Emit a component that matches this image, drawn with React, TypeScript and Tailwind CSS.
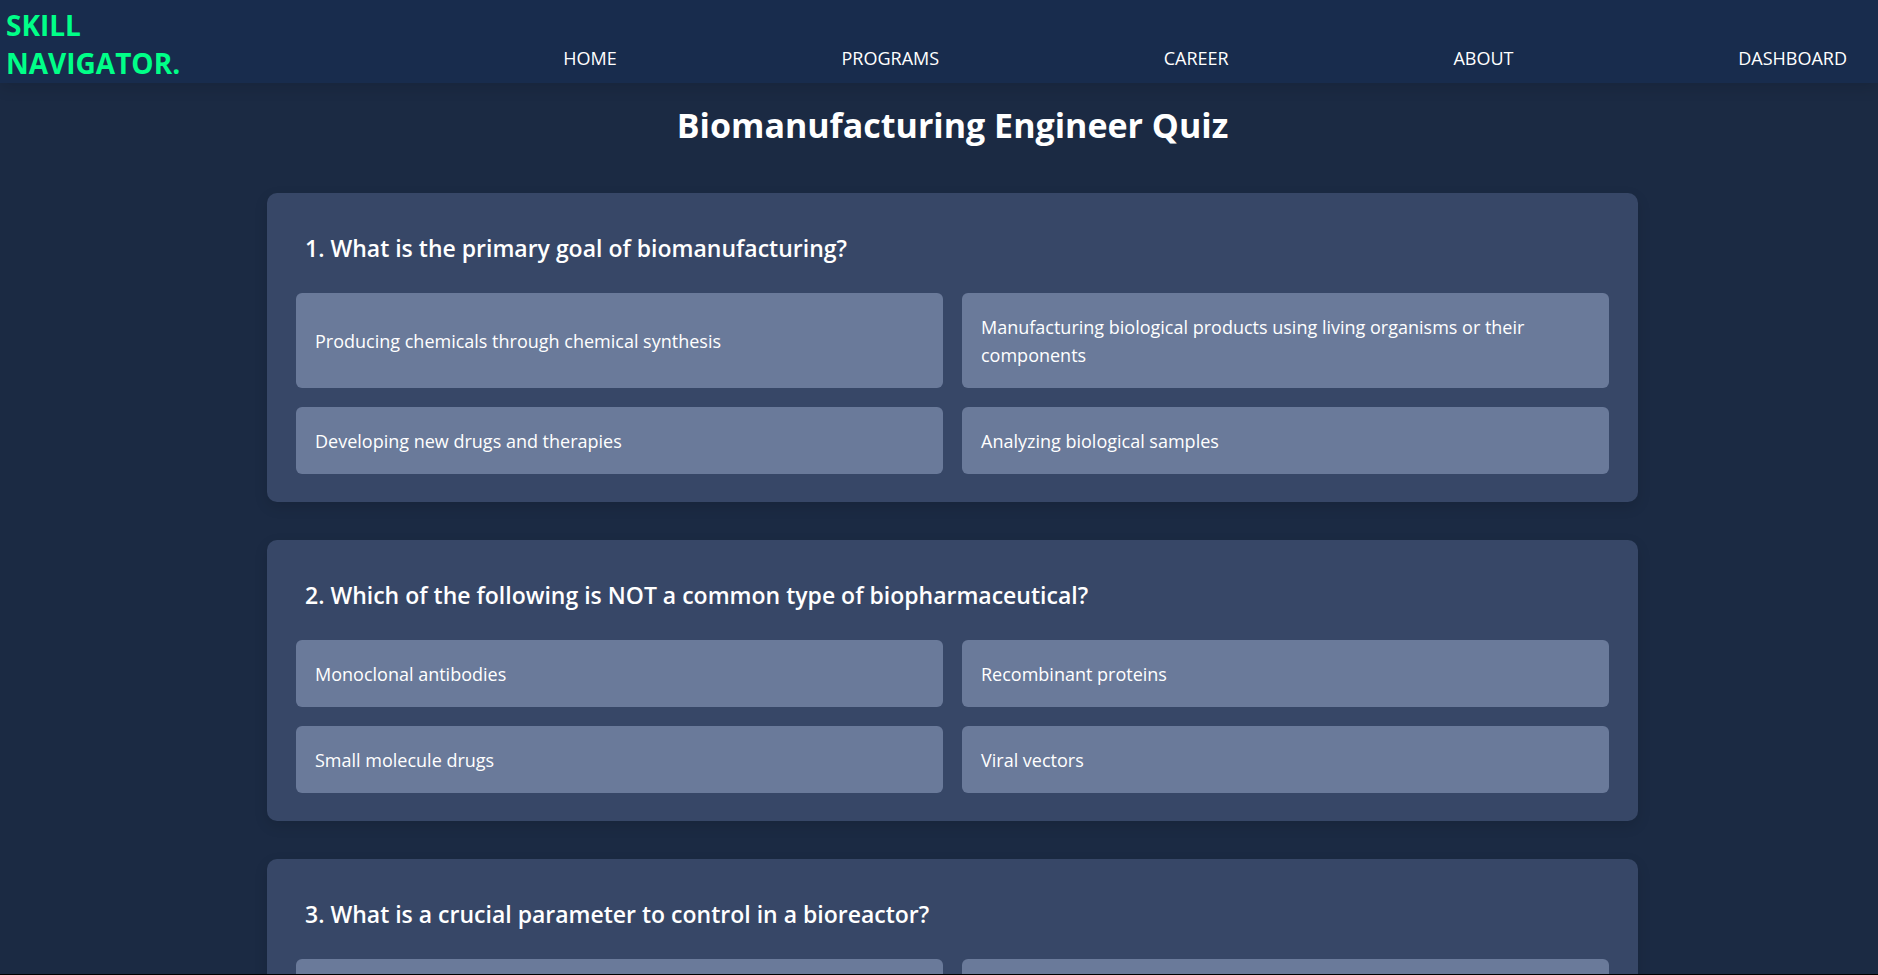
import { useState } from "react";

type Question = { text: string; options: string[] };

const links = ["Home", "Programs", "Career", "About", "Dashboard"];

const questions: Question[] = [
  {
    text: "What is the primary goal of biomanufacturing?",
    options: [
      "Producing chemicals through chemical synthesis",
      "Manufacturing biological products using living organisms or their components",
      "Developing new drugs and therapies",
      "Analyzing biological samples",
    ],
  },
  {
    text: "Which of the following is NOT a common type of biopharmaceutical?",
    options: ["Monoclonal antibodies", "Recombinant proteins", "Small molecule drugs", "Viral vectors"],
  },
  {
    text: "What is a crucial parameter to control in a bioreactor?",
    options: ["Temperature", "pH", "Dissolved oxygen", "All of the above"],
  },
];

function Header() {
  return (
    <header className="z-10 flex items-end bg-[#182c4d] pr-[31px] shadow-[0_5px_14px_rgba(0,0,0,0.12)]">
      <a href="#home" className="w-[30.5%] pt-[6px] pb-px pl-[6px] text-[28px] leading-[38px] font-bold text-[#00ff88]">
        <span className="block">SKILL</span>
        <span className="block">NAVIGATOR.</span>
      </a>
      <nav className="flex-1 pb-[11px]">
        <ul className="flex justify-between text-[18px] leading-[28px] uppercase">
          {links.map((link) => (
            <li key={link}>
              <a href={`#${link.toLowerCase()}`}>{link}</a>
            </li>
          ))}
        </ul>
      </nav>
    </header>
  );
}

function QuestionCard({ question, number }: { question: Question; number: number }) {
  const [selected, setSelected] = useState<number | null>(null);
  return (
    <section className="rounded-[10px] bg-[#374767] px-[29px] pb-7 shadow-[0_5px_14px_rgba(0,0,0,0.12)]">
      <h2 className="px-[9px] pt-[37px] pb-[27px] text-[23px] leading-9 font-semibold">
        {number}. {question.text}
      </h2>
      <div className="grid grid-cols-2 gap-[19px]">
        {question.options.map((option, i) => (
          <button
            key={option}
            type="button"
            aria-pressed={selected === i}
            onClick={() => setSelected(i)}
            className="rounded-[6px] bg-[#6a7a9a] px-[19px] pt-5 pb-[19px] text-left text-[18px] leading-[28px] hover:bg-[#7786a5] aria-pressed:bg-[#00b562]"
          >
            {option}
          </button>
        ))}
      </div>
    </section>
  );
}

export default function App() {
  return (
    <div className="flex h-screen flex-col border-b border-black bg-[#1b2a43] font-['Open_Sans','Noto_Sans',sans-serif] text-white">
      <Header />
      <main className="min-h-0 flex-1 overflow-y-auto pl-[27px] [scrollbar-width:none]">
        <div className="mx-auto max-w-[1371px]">
          <h1 className="pt-[13px] pb-[39px] text-center text-[34px] leading-[58px] font-bold">
            Biomanufacturing Engineer Quiz
          </h1>
          <div className="flex flex-col gap-[38px] pb-[38px]">
            {questions.map((question, i) => (
              <QuestionCard key={question.text} question={question} number={i + 1} />
            ))}
          </div>
        </div>
      </main>
    </div>
  );
}
